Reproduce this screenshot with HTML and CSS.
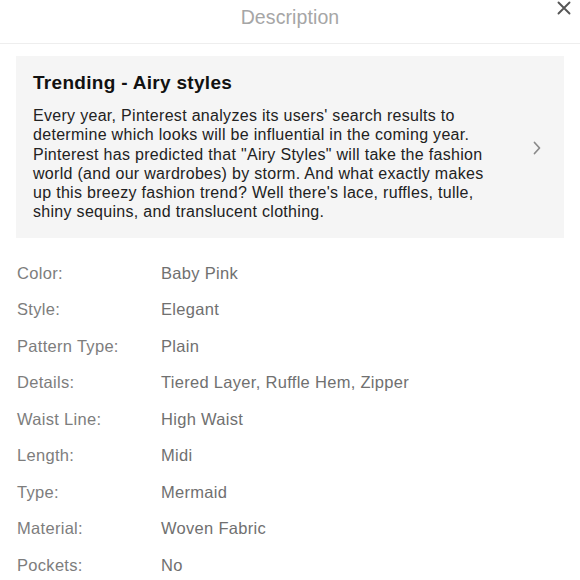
FILE: index.html
```html
<!DOCTYPE html>
<html>
<head>
<meta charset="utf-8">
<link rel="stylesheet" href="styles.css">
</head>
<body>
<div class="sheet">
  <header class="header">
    <h1 class="title">Description</h1>
    <button class="close" aria-label="Close">
      <svg width="14" height="14" viewBox="0 0 14 14"><path d="M1.5 1.5L12.5 12.5M12.5 1.5L1.5 12.5" stroke="#555" stroke-width="1.9" stroke-linecap="round"/></svg>
    </button>
  </header>
  <section class="trend">
    <div class="trend-text">
      <h2 class="trend-title">Trending - Airy styles</h2>
      <p class="trend-body">Every year, Pinterest analyzes its users' search results to determine which looks will be influential in the coming year. Pinterest has predicted that "Airy Styles" will take the fashion world (and our wardrobes) by storm. And what exactly makes up this breezy fashion trend? Well there's lace, ruffles, tulle, shiny sequins, and translucent clothing.</p>
    </div>
    <svg class="chevron" width="8" height="14" viewBox="0 0 8 14"><path d="M1.5 1.5L6.5 7L1.5 12.5" fill="none" stroke="#8a8a8a" stroke-width="1.7" stroke-linecap="round" stroke-linejoin="round"/></svg>
  </section>
  <dl class="attrs">
    <div class="row"><dt>Color:</dt><dd>Baby Pink</dd></div>
    <div class="row"><dt>Style:</dt><dd>Elegant</dd></div>
    <div class="row"><dt>Pattern Type:</dt><dd>Plain</dd></div>
    <div class="row"><dt>Details:</dt><dd>Tiered Layer, Ruffle Hem, Zipper</dd></div>
    <div class="row"><dt>Waist Line:</dt><dd>High Waist</dd></div>
    <div class="row"><dt>Length:</dt><dd>Midi</dd></div>
    <div class="row"><dt>Type:</dt><dd>Mermaid</dd></div>
    <div class="row"><dt>Material:</dt><dd>Woven Fabric</dd></div>
    <div class="row"><dt>Pockets:</dt><dd>No</dd></div>
  </dl>
</div>
</body>
</html>
```

FILE: styles.css
```css
* { box-sizing: border-box; }
html, body { margin: 0; padding: 0; background: #fff; }
body {
  font-family: "Liberation Sans", Arial, sans-serif;
  color: #222;
  overflow: hidden;
}
.sheet { width: 580px; }
.header {
  height: 44px;
  border-bottom: 1px solid #eeeeee;
  display: flex;
  align-items: flex-start;
  justify-content: center;
  position: relative;
}
.title {
  margin: 6px 0 0;
  font-size: 19.5px;
  font-weight: 400;
  letter-spacing: 0.1px;
  color: #a6a6a6;
  line-height: 22px;
}
.close {
  position: absolute;
  right: 8px;
  top: 0;
  border: 0;
  background: none;
  padding: 0;
  width: 16px;
  height: 16px;
  display: flex;
  align-items: center;
  justify-content: center;
}
.trend {
  margin: 12px 16px 0;
  background: #f5f5f5;
  padding: 15px 23px 16px 17px;
  display: flex;
  align-items: center;
  justify-content: space-between;
}
.trend-text { width: 460px; flex: none; }
.trend-title {
  margin: 0 0 11px;
  font-size: 19px;
  font-weight: 700;
  letter-spacing: 0.3px;
  color: #111;
  line-height: 24px;
}
.trend-body {
  margin: 0;
  font-size: 16px;
  letter-spacing: 0.3px;
  line-height: 19.3px;
  color: #222;
}
.chevron { flex: none; margin-top: 4px; }
.attrs {
  margin: 17px 0 0;
  padding: 0 17px;
}
.row {
  display: flex;
  height: 36.5px;
  align-items: center;
}
.row dt {
  width: 144px;
  flex: none;
  font-size: 16.5px;
  letter-spacing: 0.3px;
  color: #7d7d7d;
}
.row dd {
  margin: 0;
  font-size: 16.5px;
  letter-spacing: 0.3px;
  color: #707070;
}
```
